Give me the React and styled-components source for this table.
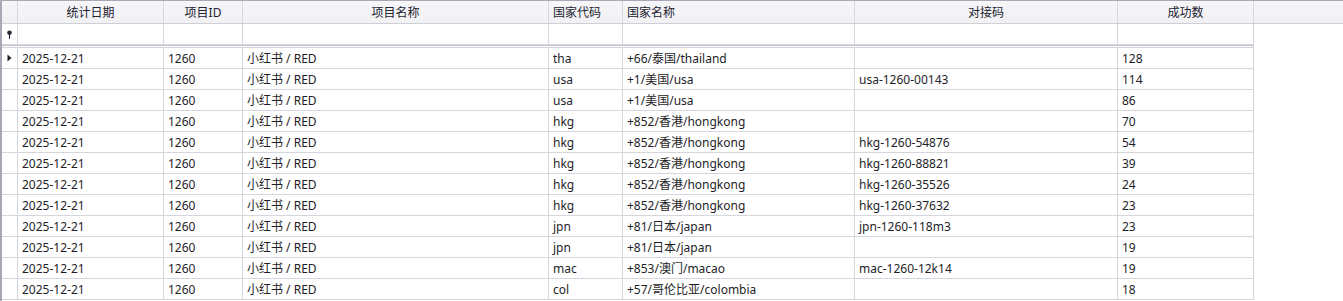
import React from 'react'
import styled, { createGlobalStyle } from 'styled-components'

const Global = createGlobalStyle`
  html, body {
    margin: 0;
    padding: 0;
    background: #fff;
    height: 301px;
    overflow: hidden;
  }
  body {
    font-family: "Noto Sans", "Noto Sans CJK SC", sans-serif;
    font-size: 12px;
    color: #1e1e28;
  }
`

const Grid = styled.div`
  width: 1343px;
  height: 301px;
  box-sizing: border-box;
  border-left: 2px solid #a9a9b6;
  border-top: 1px solid #a9a9b6;
  overflow: hidden;
`

const HeaderRow = styled.div`
  display: flex;
  height: 23px;
  background: linear-gradient(#f6f6f8, #f1f1f4);
  border-bottom: 1px solid #cfcfd7;
  box-sizing: border-box;
`

const Row = styled.div`
  display: flex;
  height: ${p => p.$h || 21}px;
`

const Cell = styled.div`
  width: ${p => p.$w}px;
  flex: 0 0 ${p => p.$w}px;
  box-sizing: border-box;
  border-right: 1px solid #d6d6de;
  border-bottom: ${p => (p.$head ? 'none' : '1px solid #d6d6de')};
  padding: 1px 4px 0;
  line-height: 19px;
  height: 100%;
  white-space: nowrap;
  overflow: hidden;
  display: flex;
  align-items: center;
  justify-content: ${p => (p.$align === 'center' ? 'center' : 'flex-start')};
`

const HeadText = styled.span`
  color: #222230;
`

const Indicator = styled(Cell)`
  padding: 0;
  justify-content: center;
`

const Separator = styled.div`
  width: 1252px;
  height: 3px;
  box-sizing: border-box;
  border-top: 1px solid #c4c4cc;
  border-bottom: 1px solid #d3d3db;
  border-right: 1px solid #d6d6de;
  background: #fff;
`

const cols = [
  { key: 'date', title: '统计日期', w: 146, align: 'center' },
  { key: 'pid', title: '项目ID', w: 79, align: 'center' },
  { key: 'pname', title: '项目名称', w: 306, align: 'center' },
  { key: 'code', title: '国家代码', w: 74 },
  { key: 'country', title: '国家名称', w: 232 },
  { key: 'link', title: '对接码', w: 263, align: 'center' },
  { key: 'ok', title: '成功数', w: 136, align: 'center' },
]

const raw = [
  ['tha', '+66/泰国/thailand', '', '128'],
  ['usa', '+1/美国/usa', 'usa-1260-00143', '114'],
  ['usa', '+1/美国/usa', '', '86'],
  ['hkg', '+852/香港/hongkong', '', '70'],
  ['hkg', '+852/香港/hongkong', 'hkg-1260-54876', '54'],
  ['hkg', '+852/香港/hongkong', 'hkg-1260-88821', '39'],
  ['hkg', '+852/香港/hongkong', 'hkg-1260-35526', '24'],
  ['hkg', '+852/香港/hongkong', 'hkg-1260-37632', '23'],
  ['jpn', '+81/日本/japan', 'jpn-1260-118m3', '23'],
  ['jpn', '+81/日本/japan', '', '19'],
  ['mac', '+853/澳门/macao', 'mac-1260-12k14', '19'],
  ['col', '+57/哥伦比亚/colombia', '', '18'],
]

const rows = raw.map(([code, country, link, ok]) => ({
  date: '2025-12-21',
  pid: '1260',
  pname: '小红书 / RED',
  code,
  country,
  link,
  ok,
}))

function PinIcon() {
  return (
    <svg width="7" height="9" viewBox="0 0 7 9">
      <circle cx="3.5" cy="2.8" r="2.3" fill="#2a2a35" />
      <rect x="3" y="4" width="1" height="5" fill="#2a2a35" />
    </svg>
  )
}

function ArrowIcon() {
  return (
    <svg width="5" height="8" viewBox="0 0 5 8">
      <path d="M0.5 0.5L4.5 4L0.5 7.5z" fill="#1e1e28" />
    </svg>
  )
}

export default function App() {
  return (
    <>
      <Global />
      <Grid>
        <HeaderRow>
          <Indicator $w={16} $head />
          {cols.map(c => (
            <Cell key={c.key} $w={c.w} $align={c.align} $head>
              <HeadText>{c.title}</HeadText>
            </Cell>
          ))}
        </HeaderRow>
        <Row $h={21}>
          <Indicator $w={16}>
            <PinIcon />
          </Indicator>
          {cols.map(c => (
            <Cell key={c.key} $w={c.w} />
          ))}
        </Row>
        <Separator />
        {rows.map((r, i) => (
          <Row key={i}>
            <Indicator $w={16}>{i === 0 && <ArrowIcon />}</Indicator>
            {cols.map(c => (
              <Cell key={c.key} $w={c.w}>
                {r[c.key]}
              </Cell>
            ))}
          </Row>
        ))}
      </Grid>
    </>
  )
}
